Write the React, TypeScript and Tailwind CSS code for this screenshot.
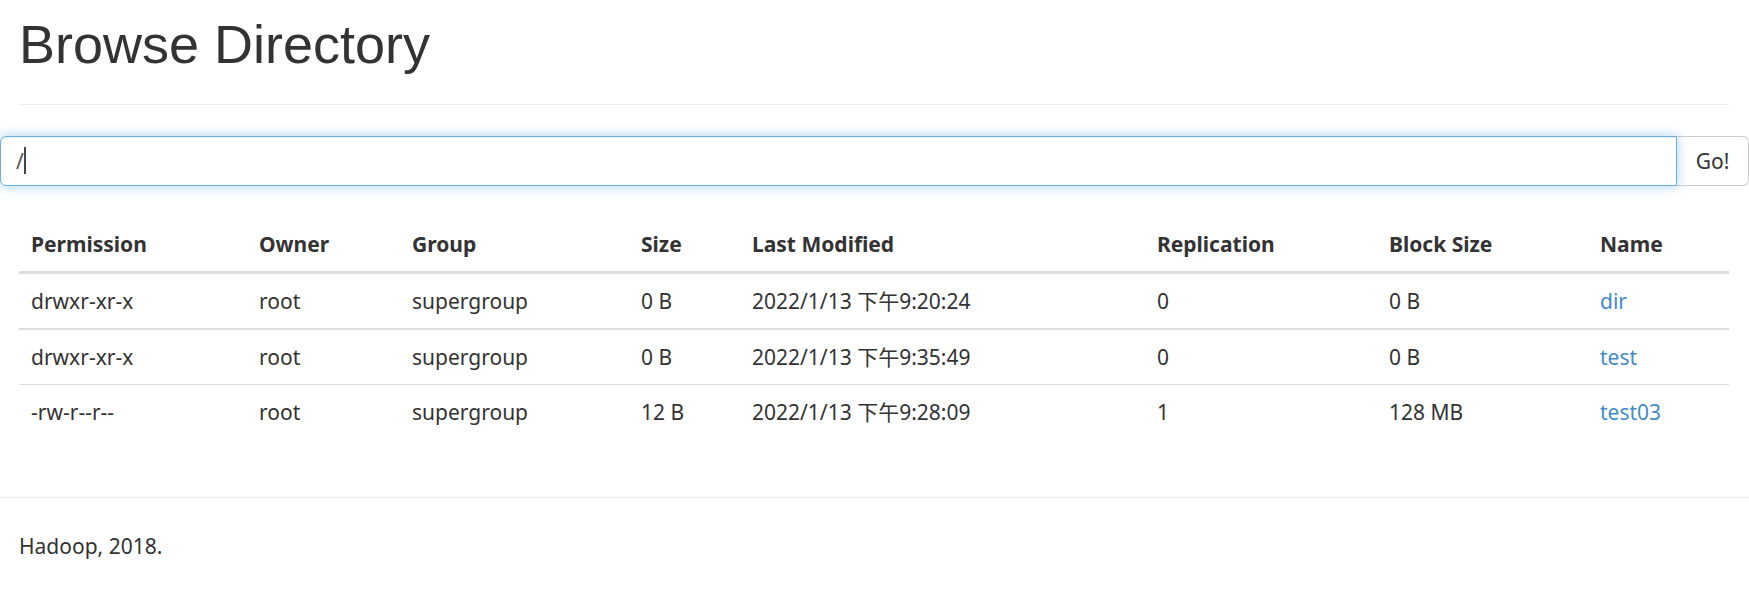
import React from 'react';

interface FileRow {
  permission: string;
  owner: string;
  group: string;
  size: string;
  modified: string;
  replication: string;
  blockSize: string;
  name: string;
}

const rows: FileRow[] = [
  {
    permission: 'drwxr-xr-x',
    owner: 'root',
    group: 'supergroup',
    size: '0 B',
    modified: '2022/1/13 下午9:20:24',
    replication: '0',
    blockSize: '0 B',
    name: 'dir',
  },
  {
    permission: 'drwxr-xr-x',
    owner: 'root',
    group: 'supergroup',
    size: '0 B',
    modified: '2022/1/13 下午9:35:49',
    replication: '0',
    blockSize: '0 B',
    name: 'test',
  },
  {
    permission: '-rw-r--r--',
    owner: 'root',
    group: 'supergroup',
    size: '12 B',
    modified: '2022/1/13 下午9:28:09',
    replication: '1',
    blockSize: '128 MB',
    name: 'test03',
  },
];

const headers = ['Permission', 'Owner', 'Group', 'Size', 'Last Modified', 'Replication', 'Block Size', 'Name'];

// row separators: the one under the header row is handled by the th border
const rowBorder = ['', 'border-t-2 border-[#ddd]', 'border-t border-[#ddd]'];

const App: React.FC = () => {
  return (
    <div className="min-h-[616px] bg-white text-[21px] leading-[30px] text-[#333] font-['Noto_Sans','Noto_Sans_CJK_SC',sans-serif]">
      <div className="pl-[19px] pr-[20px]">
        <div className="pt-[15px] pb-[30px] border-b border-[#eee]">
          <h1 className="text-[54px] leading-[59px] font-normal font-['Liberation_Sans',Arial,sans-serif]">
            Browse Directory
          </h1>
        </div>
      </div>

      {/* path input group, runs edge to edge */}
      <div className="mt-[31px] flex h-[50px]">
        <div className="relative flex-1">
          <input
            type="text"
            defaultValue="/"
            readOnly
            className="h-full w-full rounded-l-[6px] border border-[#66afe9] bg-white pl-[15px] text-[21px] text-[#555] outline-none shadow-[inset_0_1px_1px_rgba(0,0,0,0.075),0_0_12px_rgba(102,175,233,0.6)]"
          />
          <span className="pointer-events-none absolute left-[24px] top-[11px] h-[27px] w-[2px] bg-[#444]" />
        </div>
        <button className="w-[72px] rounded-r-[6px] border border-l-0 border-[#ccc] bg-white text-[21px] text-[#333]">
          Go!
        </button>
      </div>

      <div className="pl-[19px] pr-[20px] mt-[31px]">
        <table className="w-full table-fixed border-separate border-spacing-0 text-left">
          <colgroup>
            <col className="w-[228px]" />
            <col className="w-[153px]" />
            <col className="w-[229px]" />
            <col className="w-[111px]" />
            <col className="w-[405px]" />
            <col className="w-[232px]" />
            <col className="w-[211px]" />
            <col />
          </colgroup>
          <thead>
            <tr>
              {headers.map((h) => (
                <th key={h} className="px-[12px] py-[12px] font-bold border-b-[3px] border-[#ddd] whitespace-nowrap">
                  {h}
                </th>
              ))}
            </tr>
          </thead>
          <tbody>
            {rows.map((row, i) => {
              const cell = `px-[12px] py-[12px] whitespace-nowrap ${rowBorder[i]}`;
              return (
                <tr key={row.name}>
                  <td className={cell}>{row.permission}</td>
                  <td className={cell}>{row.owner}</td>
                  <td className={cell}>{row.group}</td>
                  <td className={cell}>{row.size}</td>
                  <td className={cell}>{row.modified}</td>
                  <td className={cell}>{row.replication}</td>
                  <td className={cell}>{row.blockSize}</td>
                  <td className={cell}>
                    <a href="#" className="text-[#428bca]">
                      {row.name}
                    </a>
                  </td>
                </tr>
              );
            })}
          </tbody>
        </table>
      </div>

      <hr className="mt-[58px] border-0 border-t border-[#eee]" />
      <div className="pl-[19px] pt-[33px]">
        <p>Hadoop, 2018.</p>
      </div>
    </div>
  );
};

export default App;
